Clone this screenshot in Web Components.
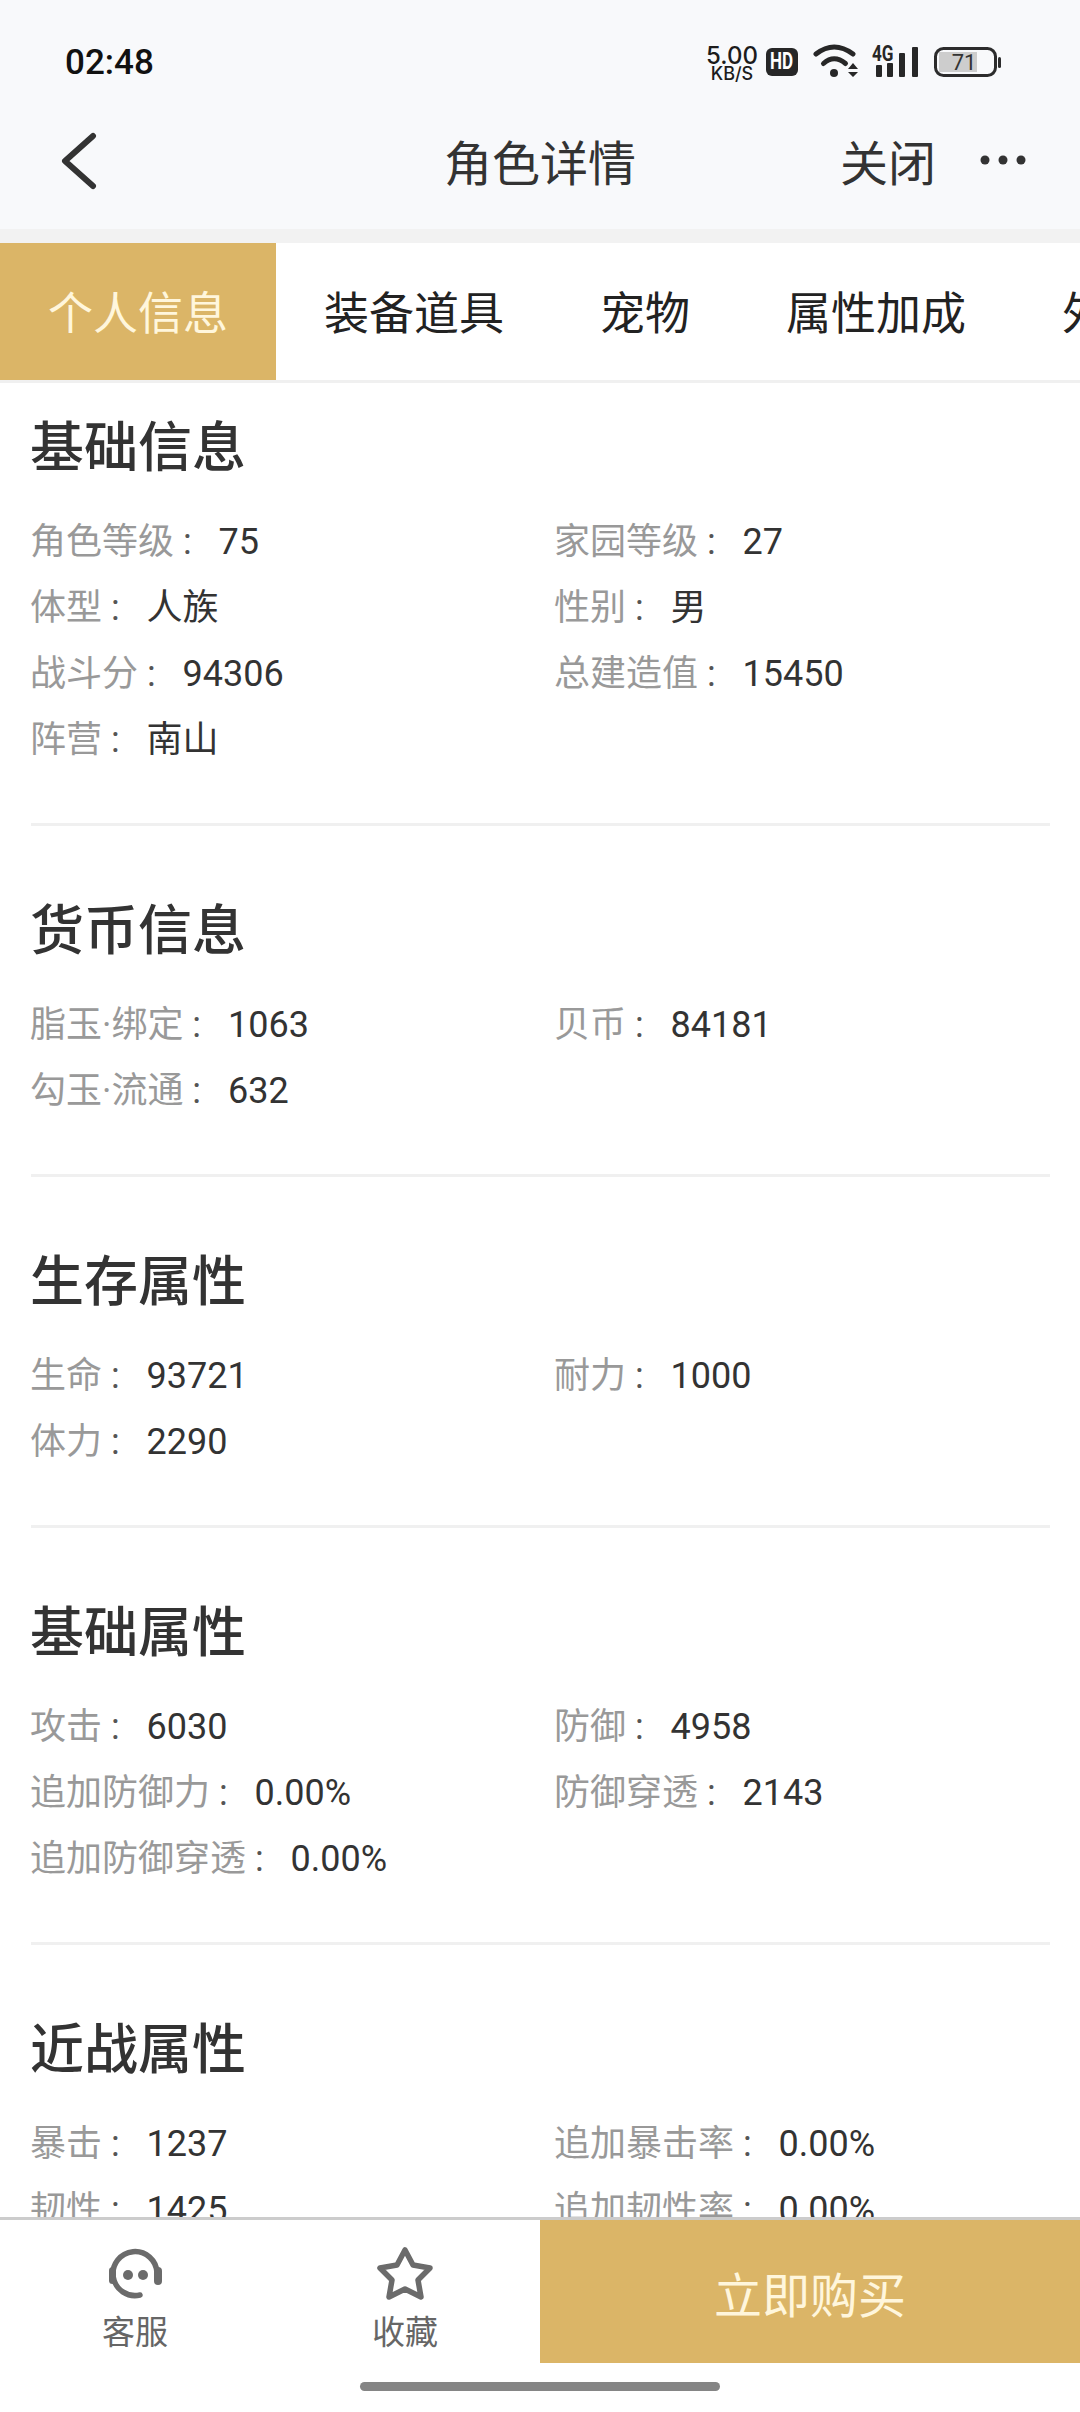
<!DOCTYPE html>
<html lang="zh">
<head>
<meta charset="utf-8">
<title>角色详情</title>
<style>
  html, body { margin: 0; padding: 0; background: #fff; }
  body { font-family: Roboto, "Noto Sans CJK SC", sans-serif; }
  #app { display: flex; flex-direction: column; height: 2412px; overflow: hidden; }
</style>
</head>
<body>
<div id="app">
  <status-bar></status-bar>
  <nav-bar>角色详情</nav-bar>
  <tab-strip>
    <tab-item active>个人信息</tab-item>
    <tab-item>装备道具</tab-item>
    <tab-item>宠物</tab-item>
    <tab-item>属性加成</tab-item>
    <tab-item>外观</tab-item>
  </tab-strip>
  <detail-list>
    <info-section heading="基础信息">
      <info-row label="角色等级">75</info-row>
      <info-row label="家园等级">27</info-row>
      <info-row label="体型">人族</info-row>
      <info-row label="性别">男</info-row>
      <info-row label="战斗分">94306</info-row>
      <info-row label="总建造值">15450</info-row>
      <info-row label="阵营">南山</info-row>
    </info-section>
    <info-section heading="货币信息">
      <info-row label="脂玉·绑定">1063</info-row>
      <info-row label="贝币">84181</info-row>
      <info-row label="勾玉·流通">632</info-row>
    </info-section>
    <info-section heading="生存属性">
      <info-row label="生命">93721</info-row>
      <info-row label="耐力">1000</info-row>
      <info-row label="体力">2290</info-row>
    </info-section>
    <info-section heading="基础属性">
      <info-row label="攻击">6030</info-row>
      <info-row label="防御">4958</info-row>
      <info-row label="追加防御力">0.00%</info-row>
      <info-row label="防御穿透">2143</info-row>
      <info-row label="追加防御穿透">0.00%</info-row>
    </info-section>
    <info-section heading="近战属性">
      <info-row label="暴击">1237</info-row>
      <info-row label="追加暴击率">0.00%</info-row>
      <info-row label="韧性">1425</info-row>
      <info-row label="追加韧性率">0.00%</info-row>
    </info-section>
  </detail-list>
  <buy-bar></buy-bar>
</div>

<script>
const statusTemplate = document.createElement("template");
statusTemplate.innerHTML = /*html*/`
  <style>
    :host {
      display: flex;
      align-items: center;
      flex: none;
      height: 76px;
      padding: 24px 78px 0 65px;
      background: #f8f9fb;
      color: #111;
    }
    .time { font: 500 35px/1 Roboto, sans-serif; margin-right: auto; }
    .speed { width: 52px; margin-top: 3px; text-align: center; font-family: Inter, sans-serif; font-weight: 500; color: #1c1c1c; }
    .speed div:first-child { font-size: 24px; line-height: 20px; }
    .speed div:last-child { font-size: 18px; line-height: 15px; }
    .hd {
      width: 32px;
      height: 28px;
      margin: 0 14px 0 8px;
      background: #272727;
      border-radius: 6px;
      color: #fff;
      font: 700 23px/28px Roboto, sans-serif;
      text-align: center;
    }
    .hd span { display: inline-block; transform: scaleX(0.74); }
    svg { display: block; flex: none; }
  </style>
  <span class="time">02:48</span>
  <div class="speed"><div>5.00</div><div>KB/S</div></div>
  <div class="hd"><span>HD</span></div>
  <svg width="48" height="40" viewBox="812 42 48 40" fill="none" stroke="#272727">
    <path d="M816 54Q834 40 853 54" stroke-width="5" stroke-linecap="round"/>
    <path d="M823.500 63.500Q834 54 845.500 63.500" stroke-width="5" stroke-linecap="round"/>
    <circle cx="834" cy="73" r="4" fill="#272727" stroke="none"/>
    <path d="M848 69L853 63L858 69ZM848 72L858 72L853 77Z" fill="#272727" stroke="none"/>
  </svg>
  <svg width="46" height="40" viewBox="872 42 46 40" style="margin-left:12px">
    <text x="0" y="61" transform="translate(872 0) scale(0.78 1)" font-family="Roboto" font-weight="700" font-size="22" fill="#272727">4G</text>
    <rect x="876" y="65" width="6" height="12" rx="1" fill="#272727"/>
    <rect x="887" y="63" width="6" height="14" rx="1" fill="#272727"/>
    <rect x="899" y="53" width="6" height="24" rx="1" fill="#272727"/>
    <rect x="912" y="47" width="6" height="30" rx="1" fill="#272727"/>
  </svg>
  <svg width="68" height="40" viewBox="934 42 68 40" style="margin-left:16px">
    <rect x="939" y="52" width="38" height="20" fill="#cdcdcd"/>
    <rect x="935.500" y="48.500" width="60" height="27" rx="8" fill="none" stroke="#2c2c2c" stroke-width="3"/>
    <rect x="998" y="57" width="3" height="11" rx="1.500" fill="#2c2c2c"/>
    <text x="964" y="70" text-anchor="middle" font-family="Roboto" font-size="22" fill="#333">71</text>
  </svg>`;

class StatusBar extends HTMLElement {
  connectedCallback() {
    this.attachShadow({ mode: "open" });
    this.shadowRoot.appendChild(statusTemplate.content.cloneNode(true));
  }
}

const navTemplate = document.createElement("template");
navTemplate.innerHTML = /*html*/`
  <style>
    :host {
      display: grid;
      grid-template-columns: 1fr auto 1fr;
      align-items: center;
      flex: none;
      height: 120px;
      padding: 0 54px 9px;
      background: #f8f9fb;
      color: #333;
      font: 48px/1 "Noto Sans CJK SC", sans-serif;
    }
    .right { display: flex; align-items: center; justify-content: flex-end; gap: 44px; }
    svg { display: block; }
    .back { margin-left: 6px; margin-top: 1px; }
  </style>
  <svg class="back" width="38" height="58" viewBox="0 0 38 58" fill="none" stroke="#333" stroke-width="6" stroke-linecap="round" stroke-linejoin="round"><path d="M33 4L5 29L33 54"/></svg>
  <slot></slot>
  <div class="right">
    <span>关闭</span>
    <svg width="46" height="10" viewBox="0 0 46 10" fill="#333"><circle cx="5" cy="5" r="4.500"/><circle cx="23" cy="5" r="4.500"/><circle cx="41" cy="5" r="4.500"/></svg>
  </div>`;

class NavBar extends HTMLElement {
  connectedCallback() {
    this.attachShadow({ mode: "open" });
    this.shadowRoot.appendChild(navTemplate.content.cloneNode(true));
  }
}

const stripTemplate = document.createElement("template");
stripTemplate.innerHTML = /*html*/`
  <style>
    :host {
      display: flex;
      flex: none;
      height: 137px;
      border-top: 14px solid #f2f2f2;
      border-bottom: 3px solid #f0f0f0;
      background: #fff;
      overflow: hidden;
    }
  </style>
  <slot></slot>`;

class TabStrip extends HTMLElement {
  connectedCallback() {
    this.attachShadow({ mode: "open" });
    this.shadowRoot.appendChild(stripTemplate.content.cloneNode(true));
  }
}

const tabTemplate = document.createElement("template");
tabTemplate.innerHTML = /*html*/`
  <style>
    :host {
      display: flex;
      align-items: center;
      flex: none;
      padding: 0 48px 2px;
      color: #222;
      font: 45px/1 "Noto Sans CJK SC", sans-serif;
      white-space: nowrap;
    }
    :host([active]) {
      background: #dbb567;
      color: #fff6dc;
    }
  </style>
  <slot></slot>`;

class TabItem extends HTMLElement {
  connectedCallback() {
    this.attachShadow({ mode: "open" });
    this.shadowRoot.appendChild(tabTemplate.content.cloneNode(true));
  }
}

const listTemplate = document.createElement("template");
listTemplate.innerHTML = /*html*/`
  <style>
    :host {
      display: block;
      flex: 1;
      min-height: 0;
      overflow: hidden;
      background: #fff;
    }
    .scroller { margin-top: -40px; }
  </style>
  <div class="scroller"><slot></slot></div>`;

class DetailList extends HTMLElement {
  connectedCallback() {
    this.attachShadow({ mode: "open" });
    this.shadowRoot.appendChild(listTemplate.content.cloneNode(true));
  }
}

const sectionTemplate = document.createElement("template");
sectionTemplate.innerHTML = /*html*/`
  <style>
    :host {
      display: block;
      margin: 0 30px 0 31px;
      padding: 63px 0 50px;
      border-bottom: 3px solid #f0f0f0;
    }
    h2 {
      margin: 0 0 27px -1px;
      color: #333;
      font: 500 54px/76px "Noto Sans CJK SC", sans-serif;
    }
    .rows { display: grid; grid-template-columns: 524px 1fr; margin-left: -1px; }
  </style>
  <h2 id="heading"></h2>
  <div class="rows"><slot></slot></div>`;

class InfoSection extends HTMLElement {
  connectedCallback() {
    this.attachShadow({ mode: "open" });
    this.shadowRoot.appendChild(sectionTemplate.content.cloneNode(true));
    this.shadowRoot.getElementById("heading").textContent = this.getAttribute("heading");
  }
}

const rowTemplate = document.createElement("template");
rowTemplate.innerHTML = /*html*/`
  <style>
    :host {
      display: block;
      height: 66px;
      color: #333;
      font: 36px/66px Roboto, "Noto Sans CJK SC", sans-serif;
      white-space: nowrap;
    }
    .label { color: #999; }
    .colon { color: #555; white-space: pre; }
    .value { margin-left: 18px; }
  </style>
  <span class="label" id="label"></span><span class="colon"> : </span><span class="value"><slot></slot></span>`;

class InfoRow extends HTMLElement {
  connectedCallback() {
    this.attachShadow({ mode: "open" });
    this.shadowRoot.appendChild(rowTemplate.content.cloneNode(true));
    this.shadowRoot.getElementById("label").textContent = this.getAttribute("label");
  }
}

const buyTemplate = document.createElement("template");
buyTemplate.innerHTML = /*html*/`
  <style>
    :host {
      display: block;
      flex: none;
      position: relative;
      height: 192px;
      border-top: 3px solid #ccc;
      background: #fff;
    }
    .row { display: flex; height: 143px; }
    .cell {
      flex: none;
      width: 270px;
      display: flex;
      flex-direction: column;
      align-items: center;
      padding-top: 27px;
      box-sizing: border-box;
      color: #666;
      font: 33px/46px "Noto Sans CJK SC", sans-serif;
    }
    .cell svg { display: block; flex: none; margin-bottom: 6px; }
    .buy {
      flex: 1;
      display: flex;
      align-items: center;
      justify-content: center;
      background: #dbb567;
      color: #fff6dc;
      font: 48px/1 "Noto Sans CJK SC", sans-serif;
    }
    .home {
      width: 360px;
      height: 9px;
      margin: 19px auto 0;
      border-radius: 5px;
      background: #858585;
    }
  </style>
  <div class="row">
    <div class="cell">
      <svg width="56" height="54" viewBox="0 0 56 54" fill="none" stroke="#6b6b6b">
        <path d="M33 48A22 22 0 1 1 50 26" stroke-width="5.500" stroke-linecap="round"/>
        <rect x="2" y="20" width="7" height="17" rx="3.500" fill="#6b6b6b" stroke="none"/>
        <rect x="47" y="20" width="8" height="18" rx="4" fill="#6b6b6b" stroke="none"/>
        <circle cx="21" cy="28" r="5" fill="#6b6b6b" stroke="none"/>
        <circle cx="36" cy="28" r="5" fill="#6b6b6b" stroke="none"/>
      </svg>
      <span>客服</span>
    </div>
    <div class="cell">
      <svg width="56" height="54" viewBox="0 0 56 54" fill="none" stroke="#6b6b6b" stroke-width="5.500" stroke-linejoin="round">
        <path d="M28 3L36 18L53 21L41 33L44 50L28 42L12 50L15 33L3 21L20 18Z"/>
      </svg>
      <span>收藏</span>
    </div>
    <div class="buy">立即购买</div>
  </div>
  <div class="home"></div>`;

class BuyBar extends HTMLElement {
  connectedCallback() {
    this.attachShadow({ mode: "open" });
    this.shadowRoot.appendChild(buyTemplate.content.cloneNode(true));
  }
}

customElements.define("status-bar", StatusBar);
customElements.define("nav-bar", NavBar);
customElements.define("tab-strip", TabStrip);
customElements.define("tab-item", TabItem);
customElements.define("detail-list", DetailList);
customElements.define("info-section", InfoSection);
customElements.define("info-row", InfoRow);
customElements.define("buy-bar", BuyBar);
</script>
</body>
</html>
